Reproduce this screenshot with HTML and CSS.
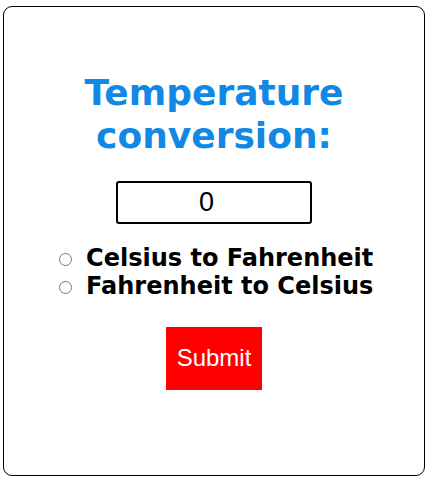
FILE: index.html
```html
<!DOCTYPE html>
<html lang="en">
<head>
    <meta charset="UTF-8">
    <meta name="viewport" content="width=device-width, initial-scale=1.0">
    <title>Temperature conversion</title>
    <link rel="stylesheet" href="styles.css">
</head>
<body>
    <div class="card">
        <h1 class="title">Temperature conversion:</h1>
        <input type="number" class="temp-input" value="0">
        <div class="options">
            <label class="option"><input type="radio" name="mode" value="c2f"> Celsius to Fahrenheit</label>
            <label class="option"><input type="radio" name="mode" value="f2c"> Fahrenheit to Celsius</label>
        </div>
        <button class="submit-btn">Submit</button>
    </div>
</body>
</html>
```

FILE: styles.css
```css
body {
    margin: 0;
    padding: 6px 3px 0;
    font-family: "DejaVu Sans", Verdana, sans-serif;
    background: white;
}
.card {
    box-sizing: border-box;
    width: 422px;
    height: 470px;
    border: 1px solid black;
    border-radius: 9px;
    display: flex;
    flex-direction: column;
    align-items: center;
    padding-top: 64px;
}
.title {
    margin: 0;
    width: 300px;
    text-align: center;
    color: #1088e4;
    font-size: 36px;
    line-height: 43px;
    font-weight: bold;
}
.temp-input {
    box-sizing: border-box;
    width: 196px;
    height: 43px;
    margin-top: 24px;
    padding: 0 4px;
    border: 2px solid black;
    border-radius: 3px;
    text-align: center;
    font-family: "Liberation Sans", Arial, sans-serif;
    font-size: 27px;
}
.options {
    margin-top: 20px;
    margin-left: 4px;
    display: flex;
    flex-direction: column;
}
.option {
    font-size: 24px;
    font-weight: bold;
    line-height: 28px;
}
.option input {
    margin: 0 6px 0 0;
    width: 13px;
    height: 13px;
}
.submit-btn {
    margin-top: 27px;
    background: #ff0000;
    color: white;
    border: none;
    padding: 17px 11px 18px;
    font-family: "Liberation Sans", Arial, sans-serif;
    font-size: 24px;
}
```
